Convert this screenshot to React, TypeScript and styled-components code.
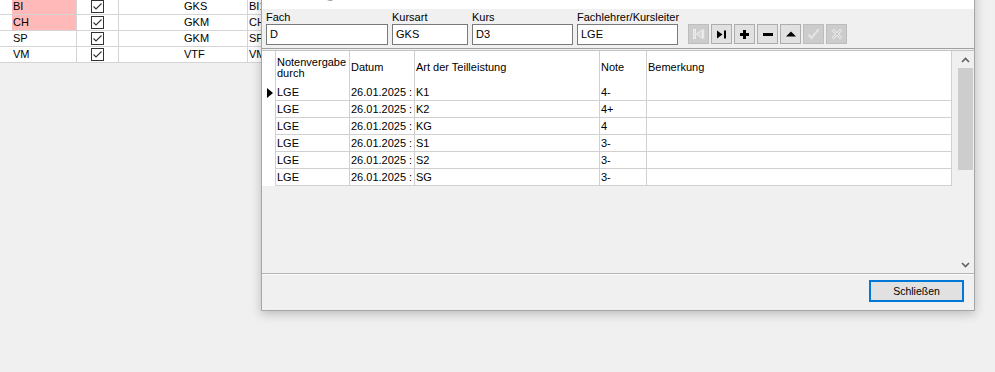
import React from 'react';
import styled, { createGlobalStyle } from 'styled-components';

const Global = createGlobalStyle`
  html, body { margin: 0; padding: 0; background: #f0f0f0; }
  body { font-family: "Liberation Sans", Arial, sans-serif; font-size: 11px; color: #000; }
  * { box-sizing: border-box; }
`;

const Screen = styled.div`
  position: relative;
  width: 995px;
  height: 372px;
  overflow: hidden;
  background: #f0f0f0;
`;

/* ---------- background table ---------- */
const BgTable = styled.div`
  margin-top: -1px;
  width: 320px;
  background: #fff;
  display: flex;
  flex-direction: column;
`;

const BgRow = styled.div`
  display: grid;
  grid-template-columns: 12px 65px 42px 62px 67px 72px;
  height: 16px;
  border-bottom: 1px solid #d4d4d4;
`;

const BgCell = styled.div<{ $pink?: boolean; $line?: boolean; $pad?: number; $center?: boolean }>`
  background: ${(p) => (p.$pink ? '#ffb9b9' : '#fff')};
  border-right: ${(p) => (p.$line ? '1px solid #d4d4d4' : 'none')};
  padding-left: ${(p) => p.$pad ?? 1}px;
  display: flex;
  align-items: center;
  justify-content: ${(p) => (p.$center ? 'center' : 'flex-start')};
  white-space: nowrap;
  overflow: hidden;
  line-height: 15px;
`;

const CheckBox = () => (
  <svg width="13" height="13" viewBox="0 0 13 13">
    <rect x="0.5" y="0.5" width="12" height="12" fill="#fff" stroke="#333" />
    <polyline points="2.5,6.5 5,9 10.5,3.5" fill="none" stroke="#333" strokeWidth="1.1" />
  </svg>
);

/* ---------- dialog ---------- */
const Dialog = styled.div`
  position: absolute;
  left: 261px;
  top: -22px;
  width: 714px;
  height: 333px;
  border: 1px solid #a6a6a6;
  background: #f0f0f0;
  box-shadow: 0 3px 10px rgba(0, 0, 0, 0.22);
  display: flex;
  flex-direction: column;
`;

const TitleBar = styled.div`
  height: 30px;
  background: #fff;
  display: flex;
  justify-content: space-between;
  padding: 8px 8px 0 8px;
  color: #a0a0a0;
  font-family: "Open Sans", "Liberation Sans", sans-serif;
  font-size: 12px;
  line-height: 14px;
  overflow: hidden;
`;

const HeaderPanel = styled.div`
  height: 40px;
  padding: 2px 0 0 4px;
  border-bottom: 1px solid #a0a0a0;
  display: flex;
  align-items: flex-start;
  gap: 4px;
`;

const Field = styled.div<{ $w: number }>`
  width: ${(p) => p.$w}px;
  display: flex;
  flex-direction: column;
`;

const Label = styled.div`
  height: 13px;
  line-height: 13px;
  white-space: nowrap;
`;

const Input = styled.div`
  height: 21px;
  border: 1px solid #7a7a7a;
  background: #fff;
  padding-left: 3px;
  line-height: 19px;
`;

const Toolbar = styled.div`
  margin: 13px 0 0 6px;
  display: flex;
  gap: 2px;
`;

const ToolButton = styled.div<{ $off?: boolean }>`
  width: 21px;
  height: 20px;
  border: 1px solid ${(p) => (p.$off ? '#bdbdbd' : '#adadad')};
  background: ${(p) => (p.$off ? '#cccccc' : '#e1e1e1')};
  display: flex;
  align-items: center;
  justify-content: center;
`;

const GridSection = styled.div`
  margin-top: 1px;
  height: 223px;
  border-top: 1px solid #c4c4c4;
  display: flex;
`;

const GridBody = styled.div`
  flex: 1;
  background: #f0f0f0;
  display: flex;
  flex-direction: column;
`;

const COLS = '14px 74px 65px 185px 47px 305px';

const HeadRow = styled.div`
  display: grid;
  grid-template-columns: ${COLS};
  width: 690px;
  height: 33px;
  background: #fff;
`;

const HeadCell = styled.div`
  border-right: 1px solid #d0d0d0;
  padding-left: 1px;
  display: flex;
  align-items: center;
  line-height: 11px;
`;

const DataRow = styled.div`
  display: grid;
  grid-template-columns: ${COLS};
  width: 690px;
  height: 17px;
  background: #fff;
`;

const Indicator = styled.div`
  border-right: 1px solid #d0d0d0;
  padding-left: 5px;
  display: flex;
  align-items: center;
`;

const Cell = styled.div`
  border-right: 1px solid #d0d0d0;
  border-bottom: 1px solid #d0d0d0;
  padding-left: 1px;
  white-space: nowrap;
  overflow: hidden;
  text-overflow: clip;
  line-height: 16px;
`;

const ScrollBar = styled.div`
  width: 17px;
  background: #f0f0f0;
  display: flex;
  flex-direction: column;
`;

const ScrollArrow = styled.div`
  height: 17px;
  display: flex;
  align-items: center;
  justify-content: center;
`;

const Thumb = styled.div`
  height: 102px;
  margin: 0 1px;
  background: #cdcdcd;
`;

const ScrollSpace = styled.div`
  flex: 1;
`;

const Footer = styled.div`
  flex: 1;
  border-top: 1px solid #b4b4b4;
  box-shadow: inset 0 1px 0 #fbfbfb;
  display: flex;
  justify-content: flex-end;
  align-items: flex-start;
  padding: 6px 10px 0 0;
`;

const CloseButton = styled.div`
  width: 95px;
  height: 22px;
  border: 2px solid #0078d7;
  background: #e1e1e1;
  display: flex;
  align-items: center;
  justify-content: center;
  font-size: 10.5px;
`;

/* ---------- icons ---------- */
const IconFirst = () => (
  <svg width="13" height="10" viewBox="0 0 13 10">
    <rect x="1.5" y="0.5" width="2" height="9" fill="#d8d8d8" stroke="#eeeeee" />
    <polygon points="10.5,0.5 10.5,9.5 4.5,5" fill="#d8d8d8" stroke="#eeeeee" />
    <rect x="11" y="0.5" width="1.2" height="9" fill="#e8e8e8" />
  </svg>
);
const IconLast = () => (
  <svg width="11" height="9" viewBox="0 0 11 9">
    <polygon points="1,0.5 1,8.5 6.5,4.5" fill="#000" />
    <rect x="8" y="0.5" width="2" height="8" fill="#000" />
  </svg>
);
const IconPlus = () => (
  <svg width="9" height="9" viewBox="0 0 9 9">
    <rect x="0" y="3" width="9" height="3" fill="#000" />
    <rect x="3" y="0" width="3" height="9" fill="#000" />
  </svg>
);
const IconMinus = () => (
  <svg width="10" height="3" viewBox="0 0 10 3">
    <rect x="0" y="0" width="10" height="3" fill="#000" />
  </svg>
);
const IconUp = () => (
  <svg width="10" height="6" viewBox="0 0 10 6">
    <polygon points="0,5.5 10,5.5 5,0.5" fill="#000" />
  </svg>
);
const IconCheck = () => (
  <svg width="13" height="12" viewBox="0 0 13 12">
    <polyline points="1.5,6.5 4.5,10 11.5,1.5" fill="none" stroke="#e4e4e4" strokeWidth="2" />
  </svg>
);
const IconCross = () => (
  <svg width="12" height="12" viewBox="0 0 12 12">
    <path d="M1.5 1.5 L10.5 10.5 M10.5 1.5 L1.5 10.5" fill="none" stroke="#e8e8e8" strokeWidth="3" />
    <path d="M1.5 1.5 L10.5 10.5 M10.5 1.5 L1.5 10.5" fill="none" stroke="#c4c4c4" strokeWidth="1" />
  </svg>
);
const RowMarker = () => (
  <svg width="6" height="10" viewBox="0 0 6 10">
    <polygon points="0,0 6,5 0,10" fill="#000" />
  </svg>
);
const ChevronUp = () => (
  <svg width="9" height="6" viewBox="0 0 9 6">
    <polyline points="1,5 4.5,1.5 8,5" fill="none" stroke="#606060" strokeWidth="1.6" />
  </svg>
);
const ChevronDown = () => (
  <svg width="9" height="6" viewBox="0 0 9 6">
    <polyline points="1,1 4.5,4.5 8,1" fill="none" stroke="#606060" strokeWidth="1.6" />
  </svg>
);

const bgRows = [
  { fach: 'BI', pink: true, art: 'GKS', kurs: 'BI1' },
  { fach: 'CH', pink: true, art: 'GKM', kurs: 'CH1' },
  { fach: 'SP', pink: false, art: 'GKM', kurs: 'SP1' },
  { fach: 'VM', pink: false, art: 'VTF', kurs: 'VM1' },
];

const gradeRows = [
  { art: 'K1', note: '4-' },
  { art: 'K2', note: '4+' },
  { art: 'KG', note: '4' },
  { art: 'S1', note: '3-' },
  { art: 'S2', note: '3-' },
  { art: 'SG', note: '3-' },
];

export default function App() {
  return (
    <Screen>
      <Global />
      <BgTable>
        {bgRows.map((r) => (
          <BgRow key={r.fach}>
            <BgCell />
            <BgCell $pink={r.pink} $line>{r.fach}</BgCell>
            <BgCell $line $center $pad={0}><CheckBox /></BgCell>
            <BgCell />
            <BgCell $line $pad={3}>{r.art}</BgCell>
            <BgCell $pad={1}>{r.kurs}</BgCell>
          </BgRow>
        ))}
      </BgTable>

      <Dialog>
        <TitleBar>
          <span>Teilleistungen</span>
          <span>✕</span>
        </TitleBar>
        <HeaderPanel>
          <Field $w={122}>
            <Label>Fach</Label>
            <Input>D</Input>
          </Field>
          <Field $w={76}>
            <Label>Kursart</Label>
            <Input>GKS</Input>
          </Field>
          <Field $w={101}>
            <Label>Kurs</Label>
            <Input>D3</Input>
          </Field>
          <Field $w={101}>
            <Label>Fachlehrer/Kursleiter</Label>
            <Input>LGE</Input>
          </Field>
          <Toolbar>
            <ToolButton $off><IconFirst /></ToolButton>
            <ToolButton><IconLast /></ToolButton>
            <ToolButton><IconPlus /></ToolButton>
            <ToolButton><IconMinus /></ToolButton>
            <ToolButton><IconUp /></ToolButton>
            <ToolButton $off><IconCheck /></ToolButton>
            <ToolButton $off><IconCross /></ToolButton>
          </Toolbar>
        </HeaderPanel>

        <GridSection>
          <GridBody>
            <HeadRow>
              <HeadCell />
              <HeadCell>Notenvergabe<br />durch</HeadCell>
              <HeadCell>Datum</HeadCell>
              <HeadCell>Art der Teilleistung</HeadCell>
              <HeadCell>Note</HeadCell>
              <HeadCell>Bemerkung</HeadCell>
            </HeadRow>
            {gradeRows.map((r, i) => (
              <DataRow key={r.art}>
                <Indicator>{i === 0 ? <RowMarker /> : null}</Indicator>
                <Cell>LGE</Cell>
                <Cell>26.01.2025 :</Cell>
                <Cell>{r.art}</Cell>
                <Cell>{r.note}</Cell>
                <Cell />
              </DataRow>
            ))}
          </GridBody>
          <ScrollBar>
            <ScrollArrow><ChevronUp /></ScrollArrow>
            <Thumb />
            <ScrollSpace />
            <ScrollArrow><ChevronDown /></ScrollArrow>
          </ScrollBar>
        </GridSection>

        <Footer>
          <CloseButton>Schließen</CloseButton>
        </Footer>
      </Dialog>
    </Screen>
  );
}
